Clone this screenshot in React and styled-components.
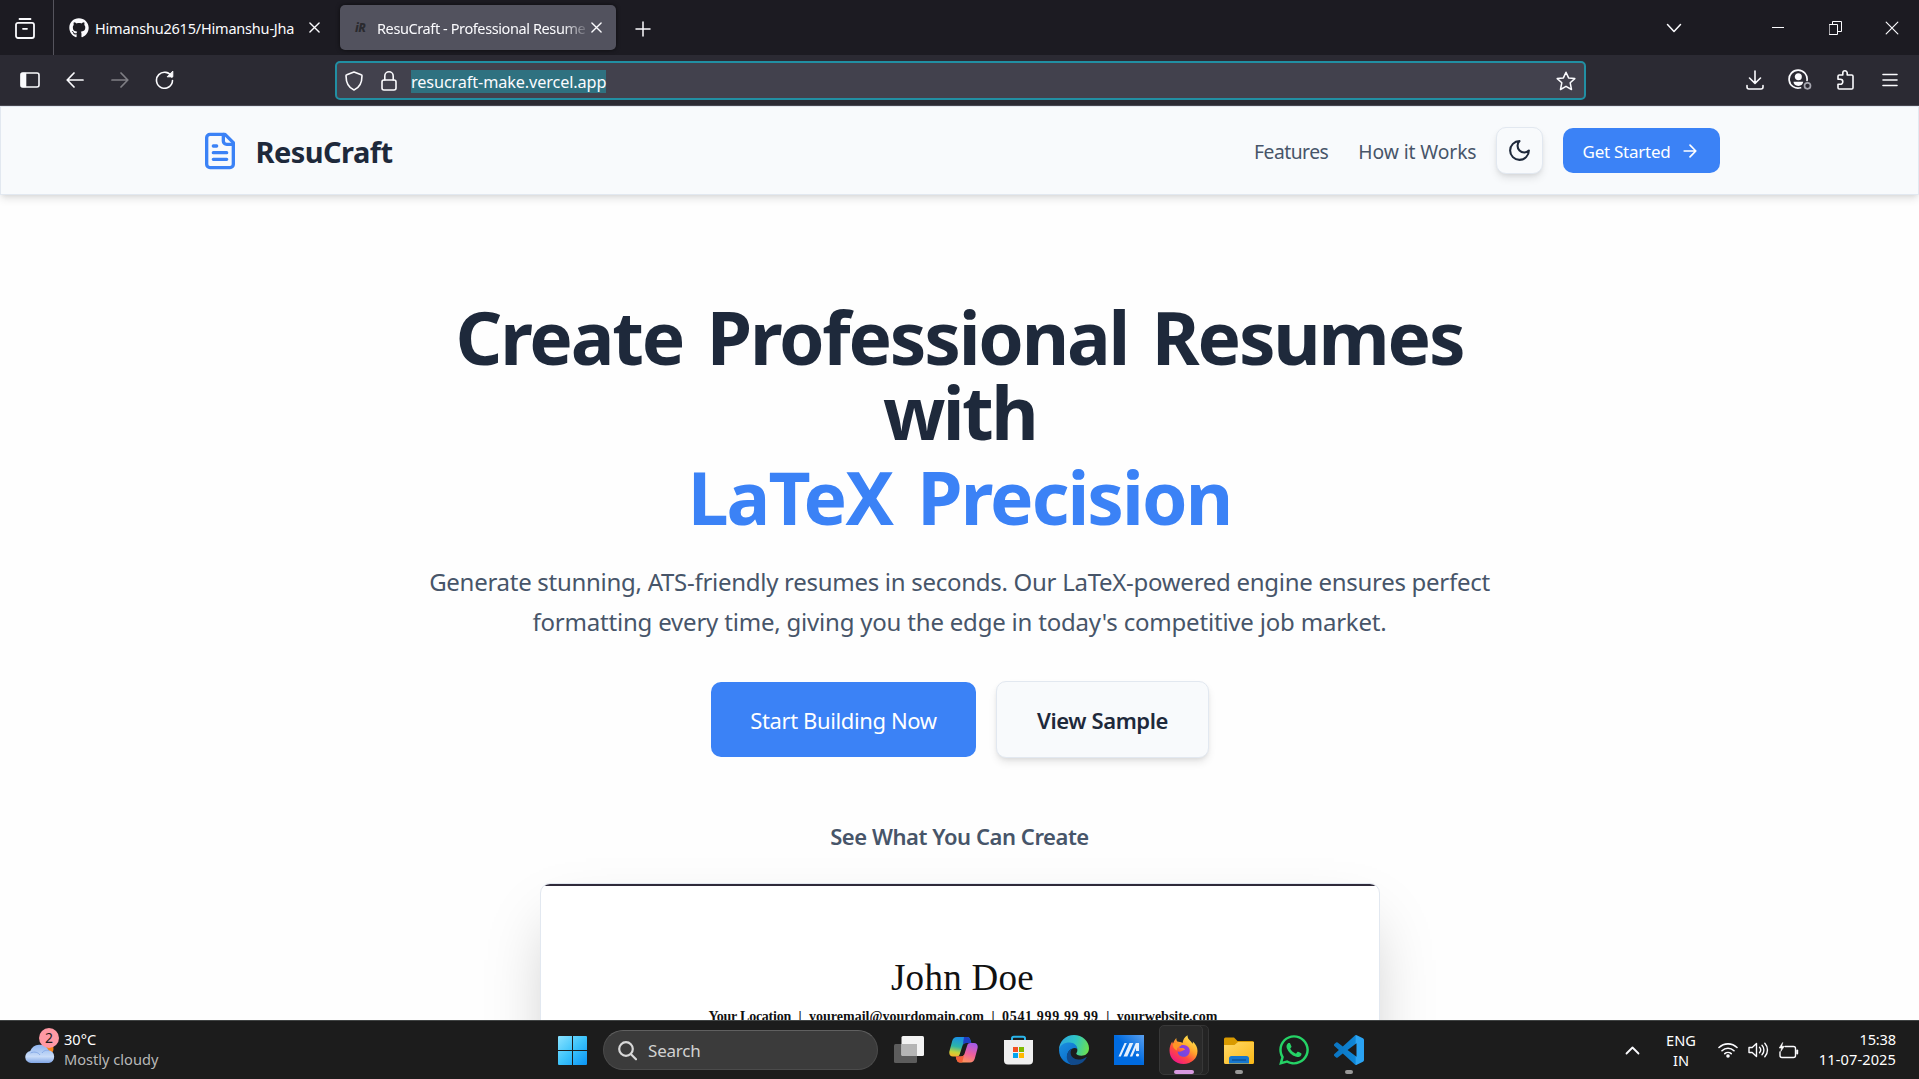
import React from "react";
import styled, { createGlobalStyle } from "styled-components";
import { FaGithub, FaWhatsapp } from "react-icons/fa";

const GlobalStyle = createGlobalStyle`
  *, *::before, *::after { box-sizing: border-box; }
  html, body { margin: 0; padding: 0; overflow: hidden; }
  body { font-family: "Noto Sans", "Open Sans", sans-serif; }
  h1, p, h3 { margin: 0; }
  svg { display: block; flex: none; }
`;

const Screen = styled.div`
  display: flex;
  flex-direction: column;
  width: 100vw;
  height: 100vh;
  overflow: hidden;
  background: #fff;
`;

const Label = styled.span`
  white-space: nowrap;
  letter-spacing: ${(p) => p.$track || 0}px;
  word-spacing: ${(p) => p.$words || 0}px;
`;

/* ---------- browser chrome ---------- */

const TabStrip = styled.div`
  display: flex;
  align-items: center;
  flex: none;
  height: 55px;
  background: #1c1b22;
  color: #fbfbfe;
  font-size: 14.5px;
  line-height: 20px;
`;

const RecentTabs = styled.div`
  display: flex;
  align-items: center;
  width: 54px;
  height: 100%;
  padding: 2px 0 0 15px;
  border-right: 1px solid #55545d;
`;

const Tab = styled.div`
  display: flex;
  align-items: center;
  width: ${(p) => p.$width}px;
  height: 45px;
  padding-left: 15px;
  border-radius: 5px;
  background: ${(p) => (p.$active ? "#52525e" : "transparent")};
  box-shadow: ${(p) => (p.$active ? "0 0 4px rgba(0, 0, 0, 0.6)" : "none")};
`;

const TabTitle = styled.div`
  width: 211px;
  margin-left: ${(p) => p.$gap}px;
  overflow: hidden;
  white-space: nowrap;
  letter-spacing: ${(p) => p.$track}px;
  mask-image: ${(p) => (p.$fade ? "linear-gradient(to right, #000 88%, transparent 101%)" : "none")};
`;

const Favicon = styled.div`
  width: 13px;
  font-size: 12px;
  line-height: 18px;
  font-weight: 800;
  font-style: italic;
  letter-spacing: -0.5px;
  color: #2a2a2f;
`;

const WindowButtons = styled.div`
  display: flex;
  align-items: center;
  margin-left: auto;
`;

const NewTab = styled.div`
  margin: 2px 0 0 19px;
`;

const NavBar = styled.div`
  display: flex;
  align-items: center;
  flex: none;
  height: 51px;
  padding: 0 7px 1px 7px;
  background: #2b2a33;
  border-bottom: 1px solid #47464f;
`;

const IconCell = styled.div`
  display: flex;
  align-items: center;
  justify-content: center;
  flex: none;
  width: ${(p) => p.$w || 45}px;
  opacity: ${(p) => (p.$dim ? 0.4 : 1)};
`;

const IconGroup = styled.div`
  display: flex;
  margin-left: ${(p) => (p.$end ? "auto" : "0")};
`;

const UrlField = styled.div`
  display: flex;
  align-items: center;
  width: 1251px;
  height: 39px;
  margin: 2px 0 0 148px;
  border: 2px solid #218fa3;
  border-radius: 5px;
  background: #42414d;
`;

const UrlText = styled.div`
  height: 23px;
  margin: 1px auto 0 4px;
  background: #2f7180;
  color: #fbfbfe;
  font-size: 16.25px;
  line-height: 25px;
  letter-spacing: -0.12px;
`;

/* ---------- site ---------- */

const Page = styled.div`
  display: flex;
  flex-direction: column;
  flex: 1;
  min-height: 0;
  overflow: hidden;
  background: #fefefe;
`;

const SiteHeader = styled.header`
  flex: none;
  height: 89px;
  border: 1px solid #e2e8f0;
  background: #f8fafc;
  box-shadow: 0 5px 8px -1px rgba(0, 0, 0, 0.1), 0 2px 5px -2px rgba(0, 0, 0, 0.1);
`;

const HeaderInner = styled.div`
  display: flex;
  align-items: center;
  width: 1520px;
  height: 100%;
  margin: 0 auto;
`;

const Brand = styled.div`
  display: flex;
  align-items: center;
  gap: 16px;
  margin-right: auto;
  color: #1e293b;
  font-size: 29px;
  line-height: 38px;
  font-weight: 700;
`;

const BrandName = styled(Label)`
  padding-top: 3px;
`;

const SiteNav = styled.nav`
  display: flex;
  gap: 30px;
  padding-top: 3px;
  margin-right: 19px;
  color: #475569;
  font-size: 19.3px;
  line-height: 30px;
`;

const ThemeButton = styled.div`
  display: flex;
  align-items: center;
  justify-content: center;
  width: 47px;
  height: 47px;
  margin-right: 20px;
  border: 1px solid #e2e8f0;
  border-radius: 10px;
  background: #f8fafc;
  box-shadow: 0 5px 8px -1px rgba(0, 0, 0, 0.1), 0 2px 5px -2px rgba(0, 0, 0, 0.1);
`;

const GetStarted = styled.div`
  display: flex;
  align-items: center;
  width: 157px;
  height: 45px;
  padding: 1px 20px 0;
  justify-content: space-between;
  border-radius: 10px;
  background: #3b82f6;
  color: #fff;
  font-size: 17px;
  line-height: 25px;
`;

const Hero = styled.main`
  display: flex;
  flex-direction: column;
  align-items: center;
  padding-top: 104px;
  text-align: center;
`;

const Title = styled.h1`
  display: flex;
  flex-direction: column;
  align-items: center;
  color: #1e293b;
  font-size: 73px;
  line-height: 75px;
  font-weight: 700;
`;

const TitleAccent = styled(Label)`
  margin-top: 10px;
  color: #3b82f6;
`;

const Lead = styled.p`
  display: flex;
  flex-direction: column;
  align-items: center;
  margin-top: 28px;
  color: #475569;
  font-size: 24px;
  line-height: 40px;
`;

const Actions = styled.div`
  display: flex;
  align-items: center;
  gap: 20px;
  margin-top: 39px;
  font-size: 22px;
  line-height: 35px;
`;

const PrimaryAction = styled.div`
  display: flex;
  align-items: center;
  justify-content: center;
  width: 265px;
  height: 75px;
  padding: 2px 0 0 1px;
  border-radius: 10px;
  background: #3b82f6;
  color: #fff;
`;

const SecondaryAction = styled.div`
  display: flex;
  align-items: center;
  justify-content: center;
  width: 213px;
  height: 77px;
  padding: 2px 0 0 1px;
  border: 1px solid #e2e8f0;
  border-radius: 10px;
  background: #f8fafc;
  color: #1e293b;
  font-weight: 600;
  box-shadow: 0 5px 8px -1px rgba(0, 0, 0, 0.1), 0 2px 5px -2px rgba(0, 0, 0, 0.1);
`;

const SampleHeading = styled.h3`
  margin-top: 61px;
  color: #475569;
  font-size: 22px;
  line-height: 35px;
  font-weight: 600;
`;

const SampleCard = styled.section`
  display: flex;
  flex-direction: column;
  align-items: center;
  flex: none;
  width: 840px;
  height: 600px;
  margin-top: 29px;
  border: 1px solid #e2e8f0;
  border-radius: 10px;
  background: #fff;
  overflow: hidden;
  box-shadow: 0 31px 62px -15px rgba(0, 0, 0, 0.25);
  color: #111;
  font-family: "Liberation Serif", serif;
`;

const PaperEdge = styled.div`
  width: 100%;
  height: 2px;
  background: #2f2a3a;
`;

const PersonName = styled.div`
  margin: 70px 0 0 6px;
  font-size: 37px;
  line-height: 44px;
  letter-spacing: 0.3px;
`;

const ContactLine = styled.div`
  display: flex;
  gap: 7.5px;
  margin: 7px 0 0 7px;
  font-size: 14px;
  line-height: 20px;
  font-weight: 700;
`;

/* ---------- taskbar ---------- */

const Taskbar = styled.footer`
  display: flex;
  align-items: center;
  flex: none;
  height: 59px;
  border-top: 1px solid #404343;
  background: #1c1c1c;
  color: #fff;
  font-size: 14.6px;
  line-height: 20px;
`;

const Weather = styled.div`
  display: flex;
  align-items: center;
  width: 558px;
  padding: 0 0 2px 25px;
`;

const WeatherIcon = styled.div`
  position: relative;
  width: 39px;
  padding-top: 7px;
`;

const Badge = styled.div`
  position: absolute;
  left: 14px;
  top: -6px;
  width: 20px;
  height: 20px;
  border-radius: 50%;
  background: #ff99a4;
  color: #1c1c1c;
  font-size: 14px;
  line-height: 20px;
  text-align: center;
`;

const Stack = styled.div`
  display: flex;
  flex-direction: column;
  align-items: ${(p) => p.$align || "flex-start"};
  width: ${(p) => (p.$w ? `${p.$w}px` : "auto")};
  padding-bottom: ${(p) => p.$lift || 0}px;
`;

const Muted = styled.span`
  color: #b8b8b8;
`;

const SearchBox = styled.div`
  display: flex;
  align-items: center;
  gap: 11px;
  width: 275px;
  height: 40px;
  margin: 0 3px 0 16px;
  padding: 1px 0 0 14px;
  border: 1px solid #4b4b4b;
  border-top-color: #606060;
  border-radius: 20px;
  background: #3b3b3b;
  color: #d2d2d2;
  font-size: 17px;
`;

const AppCell = styled.div`
  position: relative;
  display: flex;
  align-items: center;
  justify-content: center;
  width: 55px;
  height: 50px;
`;

const TileBack = styled.div`
  position: absolute;
  left: 10px;
  top: 0;
  width: 43px;
  height: 50px;
  border: 1px solid #343434;
  border-radius: 5px;
  background: #242424;
`;

const TileFront = styled.div`
  position: absolute;
  left: 3px;
  top: 0;
  width: 44px;
  height: 50px;
  border: 1px solid #383838;
  border-radius: 5px;
  background: #2a2a2a;
`;

const AppArt = styled.div`
  position: relative;
  padding-right: 1px;
`;

const Indicator = styled.div`
  position: absolute;
  left: ${(p) => (p.$active ? 18 : 24)}px;
  bottom: 1px;
  width: ${(p) => (p.$active ? 20 : 8)}px;
  height: 4px;
  border-radius: 2px;
  background: ${(p) => (p.$active ? "#d899e0" : "#989898")};
`;

const Tray = styled.div`
  display: flex;
  align-items: center;
  margin-left: auto;
  padding-right: 23px;
`;

const TrayIcons = styled.div`
  display: flex;
  margin: 0 16px 0 -9px;
`;

/* ---------- icons ---------- */

const Line = ({ w, h, sw = 1.5, box, color = "#fbfbfe", children }) => (
  <svg width={w} height={h} viewBox={box || `0 0 ${w} ${h}`} fill="none" stroke={color}
    strokeWidth={sw} strokeLinecap="round" strokeLinejoin="round">{children}</svg>
);

const CloseX = ({ size = 11, sw = 1.5 }) => (
  <Line w={size} h={size} box="0 0 12 12" sw={sw}><path d="M1 1l10 10M11 1L1 11" /></Line>
);

const FileIcon = () => (
  <Line w={40} h={40} box="0 0 24 24" sw={2} color="#3b82f6">
    <path d="M15 2H6a2 2 0 0 0-2 2v16a2 2 0 0 0 2 2h12a2 2 0 0 0 2-2V7Z" />
    <path d="M14 2v4a2 2 0 0 0 2 2h4M10 9H8M16 13H8M16 17H8" />
  </Line>
);

const CloudIcon = () => (
  <svg width="32" height="24" viewBox="0 0 32 24">
    <defs>
      <linearGradient id="cloud" x1="0" y1="0" x2="0" y2="1">
        <stop offset="0" stopColor="#8fb4ee" /><stop offset=".65" stopColor="#c9dcf8" /><stop offset="1" stopColor="#7fa5e6" />
      </linearGradient>
    </defs>
    <circle cx="22" cy="8" r="6.500" fill="#f7821b" />
    <path d="M6 22a6 6 0 0 1-.8-11.9A10 10 0 0 1 23.500 9.200 6.500 6.500 0 0 1 24 22z" fill="url(#cloud)" />
    <path d="M5.500 12c4-2 8-.5 9.500 2M17 12c2-3 5-3 7-2.500" stroke="#86aae8" fill="none" />
  </svg>
);

const StartIcon = () => (
  <svg width="29" height="29" viewBox="0 0 29 29">
    <defs>
      <linearGradient id="win" x1="0" y1="0" x2="1" y2="1">
        <stop offset="0" stopColor="#8be3ff" /><stop offset=".5" stopColor="#3cc3fb" /><stop offset="1" stopColor="#0a94f5" />
      </linearGradient>
    </defs>
    <path fill="url(#win)" d="M1 0h13v14H0V1a1 1 0 0 1 1-1zM15 0h13a1 1 0 0 1 1 1v13H15zM0 15h14v14H1a1 1 0 0 1-1-1zM15 15h14v13a1 1 0 0 1-1 1H15z" />
  </svg>
);

const TaskViewIcon = () => (
  <svg width="30" height="28" viewBox="0 0 30 28">
    <rect x="0" y="8" width="23" height="19" rx="1.500" fill="#5c5c5c" />
    <rect x="7.500" y="0" width="22.500" height="20" rx="1.500" fill="#f3f3f3" />
    <path d="M7.500 8H23v12H8.500a1 1 0 0 1-1-1z" fill="#b5b5b5" />
  </svg>
);

const CopilotIcon = () => (
  <svg width="29" height="26" viewBox="0 0 29 26">
    <defs>
      <linearGradient id="copA" x1=".5" y1="0" x2=".3" y2="1">
        <stop offset="0" stopColor="#1a8de8" /><stop offset=".5" stopColor="#2cb5a8" /><stop offset=".8" stopColor="#c5d43a" /><stop offset="1" stopColor="#f7b52c" />
      </linearGradient>
      <linearGradient id="copB" x1=".7" y1="0" x2=".3" y2="1">
        <stop offset="0" stopColor="#a55be8" /><stop offset=".5" stopColor="#ee5f9d" /><stop offset="1" stopColor="#ff9a55" />
      </linearGradient>
    </defs>
    <path d="M8 0h10c2 0 2.800 1.200 3.400 3l.9 3H17c-2 0-3 1-3.600 3l-2.600 8c-.6 1.800-1.500 2.500-3.300 2.500H4C1 19.500-.3 17 .5 14L3.200 4C4 1.500 5.500 0 8 0z" fill="url(#copA)" />
    <path d="M18 0c2 0 2.800 1.200 3.400 3l.9 3H17c-1.500 0-2.600.7-3.200 2L15 0z" fill="#1f3fc4" />
    <path d="M21 25.500H11c-2 0-2.800-1.200-3.400-3l-.9-3H12c2 0 3-1 3.600-3l2.600-8C18.800 6.700 19.700 6 21.500 6H25c3 0 4.300 2.500 3.500 5.500l-2.700 10c-.8 2.500-2.300 4-4.800 4z" fill="url(#copB)" />
    <path d="M11 25.500c-2 0-2.800-1.200-3.400-3l-.9-3H12c1.500 0 2.600-.7 3.200-2l-2 8z" fill="#f4603a" />
  </svg>
);

const StoreIcon = () => (
  <svg width="29" height="30" viewBox="0 0 29 30">
    <path d="M8 7V3.500C8 2.500 8.500 1.800 9.800 1.800h9.400c1.300 0 1.800.7 1.800 1.700V7" fill="none" stroke="#2ab5ea" strokeWidth="2" />
    <path d="M0 5h29v20.500a4 4 0 0 1-4 4H4a4 4 0 0 1-4-4z" fill="#efefef" />
    <path fill="#f25022" d="M9 12h5v5H9z" /><path fill="#7fba00" d="M15 12h5v5h-5z" />
    <path fill="#00a4ef" d="M9 18h5v5H9z" /><path fill="#ffb900" d="M15 18h5v5h-5z" />
  </svg>
);

const EdgeIcon = () => (
  <svg width="30" height="30" viewBox="0 0 24 24">
    <defs>
      <linearGradient id="edgeTop" x1="0" y1=".4" x2="1" y2=".6">
        <stop offset="0" stopColor="#2da7e0" /><stop offset=".5" stopColor="#2fc5c5" /><stop offset="1" stopColor="#6be050" />
      </linearGradient>
      <linearGradient id="edgeLeft" x1="0" y1="0" x2=".6" y2="1">
        <stop offset="0" stopColor="#1b8fe0" /><stop offset="1" stopColor="#0a6cc8" />
      </linearGradient>
    </defs>
    <path d="M0 12C0 5 5.400 0 12 0s12 5 12 10.500c0 3.800-2.800 6-6 6-2.600 0-4.200-.9-4.200-1.700 0-.5.9-1 .9-2.600C14.700 9 12 7 8.500 7 4.500 7 1 9 0 12z" fill="url(#edgeTop)" />
    <path d="M0 12c.6-4 4-6 8.500-6 3.500 0 6 2.300 6.200 5.200C13.500 10.300 12 10 10.300 11 6 13 6 18 8 21c1.200 1.800 2.800 2.800 4.500 3C5.500 24 0 18.800 0 12z" fill="url(#edgeLeft)" />
    <path d="M22 18c-1.800 3.700-5.500 6-9.500 6-4.500 0-6.700-4-6.200-7.500.4-2.600 2-4.800 4-5.500-.7 1-1 2-1 3.200 0 3 2.700 5.400 6.300 5.400 2.400 0 4.300-.8 5.700-1.700.5-.3.900-.3.700.1z" fill="#114a8b" />
  </svg>
);

const AsusIcon = () => (
  <svg width="30" height="30" viewBox="0 0 30 30">
    <defs>
      <linearGradient id="asus" x1="0" y1="1" x2="1" y2="0">
        <stop offset=".5" stopColor="#006be0" /><stop offset="1" stopColor="#5ba0ee" />
      </linearGradient>
    </defs>
    <path d="M0 0h30v30H0z" fill="url(#asus)" />
    <path d="M4.500 21.500h2.300l6-13.500h-2.300zM9.500 21.500h3.800l6-13.500h-3.800zM15.800 21.500L21.800 8H25v8h-3v-3.200L18.300 21.500z" fill="#e3effd" />
    <circle cx="23.500" cy="20" r="1.600" fill="#fff" />
  </svg>
);

const FirefoxIcon = () => (
  <svg width="29" height="30" viewBox="0 0 29 30">
    <defs>
      <linearGradient id="fox" x1=".8" y1=".1" x2=".2" y2=".95">
        <stop offset="0" stopColor="#ffe14d" /><stop offset=".35" stopColor="#ffa62b" /><stop offset=".65" stopColor="#ff4b3e" /><stop offset="1" stopColor="#f0158a" />
      </linearGradient>
      <linearGradient id="foxCore" x1="0" y1="1" x2="1" y2="0">
        <stop offset="0" stopColor="#5b50e0" /><stop offset="1" stopColor="#a437dc" />
      </linearGradient>
    </defs>
    <path d="M14.500 29C6.500 29 .5 23.300.5 15.500c0-3.500 1-6.500 2.700-9 .2 1 .4 1.700.8 2.300C4.800 6.500 6 4.300 7.300 3c0 1.500.3 2.600 1 3.500 2 .2 3.500.5 5.200 1.500C14 5 15.500 2 18.500.3c0 2.500 1 4 2.700 5.500 1 .9 1.800 1.900 2.300 3 .4-.7.500-1.500.4-2.300 3 2.800 4.600 6 4.600 9.500 0 7.500-6 13-14 13z" fill="url(#fox)" />
    <path d="M9.500 11.500c3-2.500 9.500-2 11 2.500 1.200 4-1.800 7.800-5.800 7.800-3.700 0-6.200-2.500-6-5.500 1.500.8 3.300.6 4.300-.3 1-.8 2-1 3-1.200-.3-1.300-1.700-1.900-3.300-1.800-1.500.1-2.500-.5-3.200-1.500z" fill="url(#foxCore)" />
    <path d="M4 8.800c1-.9 2.700-1.300 4.500-.6 1 .5 2.600 1 5 .8-1.700 1.500-2 2.500-3.800 3-1.800.6-2 2-1.700 3.500C5 14.500 3.500 11.500 4 8.800z" fill="#ff9526" />
  </svg>
);

const FolderIcon = () => (
  <svg width="30" height="27" viewBox="0 0 30 27">
    <defs>
      <linearGradient id="folder" x1="0" y1="0" x2="1" y2="1">
        <stop offset="0" stopColor="#ffd968" /><stop offset="1" stopColor="#fbb816" />
      </linearGradient>
    </defs>
    <path d="M0 2a1.500 1.500 0 0 1 1.500-1.500H10L13.500 4H28.500A1.500 1.500 0 0 1 30 5.500V12H0z" fill="#d99a00" />
    <path d="M0 8h10.500L14 5h16v20.500a1.500 1.500 0 0 1-1.500 1.500h-27A1.500 1.500 0 0 1 0 25.500z" fill="url(#folder)" />
    <path d="M5 26.500v-5A2.500 2.500 0 0 1 7.500 19h15a2.500 2.500 0 0 1 2.500 2.500v5z" fill="#1677cf" />
    <path d="M8 23h14" stroke="#0b4f93" strokeWidth="1.300" />
  </svg>
);

const CodeIcon = () => (
  <svg width="30" height="30" viewBox="0 0 24 24">
    <defs>
      <linearGradient id="code" x1="0" y1="0" x2="1" y2="0">
        <stop offset="0" stopColor="#0b74c0" /><stop offset=".7" stopColor="#0f86d6" /><stop offset=".75" stopColor="#2ba4f2" /><stop offset="1" stopColor="#2aa2f2" />
      </linearGradient>
    </defs>
    <path fill="url(#code)" d="M23.150 2.587L18.210.21a1.494 1.494 0 0 0-1.705.29l-9.460 8.630-4.120-3.128a.999.999 0 0 0-1.276.057L.327 7.261A1 1 0 0 0 .326 8.740L3.899 12 .326 15.260a1 1 0 0 0 .001 1.479L1.650 17.940a.999.999 0 0 0 1.276.057l4.120-3.128 9.460 8.630a1.492 1.492 0 0 0 1.704.290l4.942-2.377A1.500 1.500 0 0 0 24 20.060V3.939a1.500 1.500 0 0 0-.850-1.352zm-5.146 14.861L10.826 12l7.178-5.448v10.896z" />
  </svg>
);

/* ---------- sections ---------- */

const BrowserTabs = () => (
  <TabStrip>
    <RecentTabs>
      <Line w={20} h={21} sw={1.8}>
        <path d="M4.500 1h11M3 4.800h14a2 2 0 0 1 2 2V18a2 2 0 0 1-2 2H3a2 2 0 0 1-2-2V6.800a2 2 0 0 1 2-2zM8 10.800h4" />
      </Line>
    </RecentTabs>
    <Tab $width={286}>
      <FaGithub size={20} />
      <TabTitle $gap={6} $track={-0.2}>Himanshu2615/Himanshu-Jha</TabTitle>
      <IconCell $w={16}><CloseX /></IconCell>
    </Tab>
    <Tab $width={276} $active>
      <Favicon>iR</Favicon>
      <TabTitle $gap={9} $track={-0.4} $fade>ResuCraft - Professional Resume</TabTitle>
      <IconCell $w={16}><CloseX /></IconCell>
    </Tab>
    <NewTab><Line w={16} h={16}><path d="M8 1v14M1 8h14" /></Line></NewTab>
    <WindowButtons>
      <IconCell $w={152}><Line w={16} h={10}><path d="M1.500 1.500L8 8.500l6.500-7" /></Line></IconCell>
      <IconCell $w={56}><Line w={12} h={2} sw={1}><path d="M0 .5h12" /></Line></IconCell>
      <IconCell $w={58}>
        <Line w={13} h={14} sw={1}><path d="M.5 3.500h8v10h-8zM3.500 3.500v-3h9v10h-4" strokeLinejoin="miter" /></Line>
      </IconCell>
      <IconCell $w={55}><CloseX size={14} sw={1} /></IconCell>
    </WindowButtons>
  </TabStrip>
);

const BrowserNav = () => (
  <NavBar>
    <IconGroup>
      <IconCell>
        <Line w={20} h={16} sw={1.6}>
          <rect x="1" y="1" width="18" height="14" rx="2" /><path d="M1.500 1.500h4v13h-4z" fill="#fbfbfe" />
        </Line>
      </IconCell>
      <IconCell><Line w={18} h={16} sw={1.7}><path d="M17 8H1.500M8 1L1.200 8 8 15" /></Line></IconCell>
      <IconCell $dim><Line w={18} h={16} sw={1.7}><path d="M1 8h15.500M10 1l6.800 7-6.800 7" /></Line></IconCell>
      <IconCell>
        <Line w={19} h={19} sw={1.6}>
          <path d="M16.800 7A8 8 0 1 0 17.500 10.500" /><path d="M17.800 1.500v5.300h-5.300z" fill="#fbfbfe" strokeWidth="1" />
        </Line>
      </IconCell>
    </IconGroup>
    <UrlField>
      <IconCell $w={34}>
        <Line w={18} h={20} sw={1.6}><path d="M9 1l7.200 2.800c.5 0 .8.500.8 1C17 11.500 14 17 9 19 4 17 1 11.500 1 4.800c0-.5.3-1 .8-1z" /></Line>
      </IconCell>
      <IconCell $w={36}>
        <Line w={16} h={20} sw={1.6}><rect x="1" y="9" width="14" height="10" rx="2" /><path d="M3.800 9V5a4.200 4.200 0 0 1 8.400 0v4" /></Line>
      </IconCell>
      <UrlText>resucraft-make.vercel.app</UrlText>
      <IconCell $w={36}>
        <Line w={20} h={20} sw={1.5}><path d="M10 1.200l2.600 5.700 6.200.7-4.600 4.200 1.300 6.700L10 15.300l-5.500 3.200 1.300-6.700L1.200 7.600l6.200-.7z" /></Line>
      </IconCell>
    </UrlField>
    <IconGroup $end>
      <IconCell>
        <Line w={18} h={20} sw={1.6}><path d="M9 1v12M3.500 8L9 13.300 14.500 8M1 15.500v1.500a2 2 0 0 0 2 2h12a2 2 0 0 0 2-2v-1.500" /></Line>
      </IconCell>
      <IconCell>
        <Line w={24} h={21} sw={1.7}>
          <path d="M12.500 18.800A9 9 0 1 1 19 11.500" />
          <circle cx="10.300" cy="7.700" r="2.700" fill="#fbfbfe" />
          <path d="M5.500 12.800h9.700c0 2.200-2 4.200-4.900 4.200s-4.800-2-4.800-4.200z" fill="#fbfbfe" stroke="none" />
          <circle cx="19.500" cy="16.800" r="3" stroke="#a5a5ae" />
        </Line>
      </IconCell>
      <IconCell>
        <Line w={18} h={20} sw={1.6}>
          <path d="M2 8.500V6.300C2 5.500 2.600 5 3.300 5h3.500V3a2 2 0 0 1 4.400 0v2h4.500c.8 0 1.300.5 1.300 1.300v11.400c0 .8-.5 1.300-1.300 1.300H3.300C2.500 19 2 18.500 2 17.700V14.300h2.300a2.400 2.400 0 0 0 0-5H2z" />
        </Line>
      </IconCell>
      <IconCell><Line w={16} h={14} sw={1.6}><path d="M1 1.500h14M1 7h14M1 12.500h14" /></Line></IconCell>
    </IconGroup>
  </NavBar>
);

const Site = () => (
  <Page>
    <SiteHeader>
      <HeaderInner>
        <Brand><FileIcon /><BrandName $track={-0.55}>ResuCraft</BrandName></Brand>
        <SiteNav>
          <Label $track={-0.5}>Features</Label>
          <Label $track={-0.1}>How it Works</Label>
        </SiteNav>
        <ThemeButton>
          <Line w={25} h={25} box="0 0 24 24" sw={2} color="#1e293b"><path d="M12 3a6 6 0 0 0 9 9 9 9 0 1 1-9-9Z" /></Line>
        </ThemeButton>
        <GetStarted>
          <Label $track={-0.25}>Get Started</Label>
          <Line w={20} h={20} box="0 0 24 24" sw={2} color="#fff"><path d="M5 12h14M12 5l7 7-7 7" /></Line>
        </GetStarted>
      </HeaderInner>
    </SiteHeader>
    <Hero>
      <Title>
        <Label $track={-2.2} $words={7}>Create Professional Resumes</Label>
        <Label $track={-2.6}>with</Label>
        <TitleAccent $track={-1.9} $words={8}>LaTeX Precision</TitleAccent>
      </Title>
      <Lead>
        <Label $track={-0.28}>Generate stunning, ATS-friendly resumes in seconds. Our LaTeX-powered engine ensures perfect</Label>
        <Label $track={-0.2}>formatting every time, giving you the edge in today's competitive job market.</Label>
      </Lead>
      <Actions>
        <PrimaryAction><Label $track={-0.38}>Start Building Now</Label></PrimaryAction>
        <SecondaryAction><Label $track={-0.4}>View Sample</Label></SecondaryAction>
      </Actions>
      <SampleHeading><Label $track={-0.45}>See What You Can Create</Label></SampleHeading>
      <SampleCard>
        <PaperEdge />
        <PersonName>John Doe</PersonName>
        <ContactLine>
          <Label $track={-0.25}>Your Location</Label><span>|</span>
          <Label>youremail@yourdomain.com</Label><span>|</span>
          <Label $track={0.65}>0541 999 99 99</Label><span>|</span>
          <Label>yourwebsite.com</Label>
        </ContactLine>
      </SampleCard>
    </Hero>
  </Page>
);

const SystemBar = () => (
  <Taskbar>
    <Weather>
      <WeatherIcon><CloudIcon /><Badge>2</Badge></WeatherIcon>
      <Stack><span>30°C</span><Muted>Mostly cloudy</Muted></Stack>
    </Weather>
    <StartIcon />
    <SearchBox>
      <Line w={19} h={20} sw={2.2} color="#d8d8d8"><circle cx="8" cy="8" r="6.800" /><path d="M13 13.300l5 5" /></Line>
      <Label $track={-0.2}>Search</Label>
    </SearchBox>
    <AppCell><TaskViewIcon /></AppCell>
    <AppCell><CopilotIcon /></AppCell>
    <AppCell><StoreIcon /></AppCell>
    <AppCell><EdgeIcon /></AppCell>
    <AppCell><AsusIcon /></AppCell>
    <AppCell><TileBack /><TileFront /><AppArt><FirefoxIcon /></AppArt><Indicator $active /></AppCell>
    <AppCell><FolderIcon /><Indicator /></AppCell>
    <AppCell><FaWhatsapp size={34} color="#25d366" /></AppCell>
    <AppCell><CodeIcon /><Indicator /></AppCell>
    <Tray>
      <IconCell $w={15}><Line w={15} h={9} sw={1.8}><path d="M1.500 7.500l6-6 6 6" /></Line></IconCell>
      <Stack $w={82} $align="center"><span>ENG</span><span>IN</span></Stack>
      <TrayIcons>
        <IconCell $w={30}>
          <Line w={20} h={16} sw={1.6}>
            <path d="M1 5.500a13 13 0 0 1 18 0M4 8.700a8.600 8.600 0 0 1 12 0M6.800 11.700a4.700 4.700 0 0 1 6.400 0" />
            <circle cx="10" cy="14" r="1" fill="#fff" />
          </Line>
        </IconCell>
        <IconCell $w={30}>
          <Line w={21} h={16} sw={1.4}>
            <path d="M1 5.500h3.200L8.500 1.500v13L4.200 10.500H1zM11.500 5.300a4 4 0 0 1 0 5.400M14 3.200a7 7 0 0 1 0 9.600M16.800 1.200a10 10 0 0 1 0 13.600" />
          </Line>
        </IconCell>
        <IconCell $w={30}>
          <Line w={21} h={17} sw={1.4}>
            <path d="M7 4.500h8.500a2 2 0 0 1 2 2v7a2 2 0 0 1-2 2H4a2 2 0 0 1-2-2V10" />
            <path d="M19.200 8.500v3" strokeWidth="2" />
            <path d="M4.500 .8L1.200 6h2.300L2.800 9.500 6.300 4.300H4z" fill="#fff" strokeWidth=".6" />
          </Line>
        </IconCell>
      </TrayIcons>
      <Stack $w={77} $align="flex-end" $lift={2}>
        <Label $track={-0.15}>15:38</Label>
        <Label $track={0.1}>11-07-2025</Label>
      </Stack>
    </Tray>
  </Taskbar>
);

export default function App() {
  return (
    <>
      <GlobalStyle />
      <Screen>
        <BrowserTabs />
        <BrowserNav />
        <Site />
        <SystemBar />
      </Screen>
    </>
  );
}
